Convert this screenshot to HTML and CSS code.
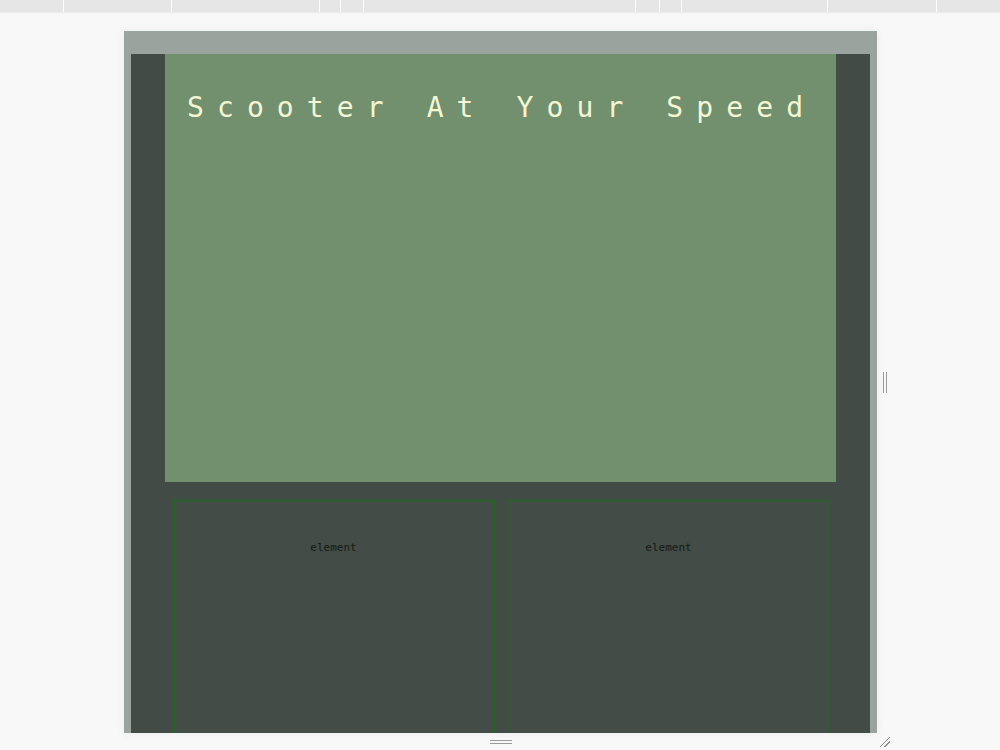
FILE: index.html
```html
<!DOCTYPE html>
<html>
<head>
<meta charset="utf-8">
<link rel="stylesheet" href="styles.css">
</head>
<body>
<div class="topbar">
  <span class="seg" style="width:64px"></span>
  <span class="seg" style="width:108px"></span>
  <span class="seg" style="width:148px"></span>
  <span class="seg" style="width:21px"></span>
  <span class="seg" style="width:23px"></span>
  <span class="seg" style="width:272px"></span>
  <span class="seg" style="width:24px"></span>
  <span class="seg" style="width:22px"></span>
  <span class="seg" style="width:146px"></span>
  <span class="seg" style="width:109px"></span>
  <span class="seg last"></span>
</div>
<div class="stage">
  <div class="frame">
    <div class="screen">
      <div class="hero">
        <h1 class="title">Scooter At Your Speed</h1>
      </div>
      <div class="cards">
        <div class="card"><p class="label">element</p></div>
        <div class="card"><p class="label">element</p></div>
      </div>
    </div>
    <span class="handle-v"></span>
    <span class="handle-h"></span>
    <span class="handle-corner"></span>
  </div>
</div>
</body>
</html>
```

FILE: styles.css
```css
html, body {
  margin: 0;
  padding: 0;
}
body {
  background: #f8f8f8;
  width: 1000px;
  height: 750px;
  overflow: hidden;
  font-family: "DejaVu Sans Mono", monospace;
}
.topbar {
  height: 12px;
  background: #e6e6e6;
  display: flex;
  box-shadow: 0 1px 0 #ececec;
}
.seg {
  height: 12px;
  box-sizing: border-box;
  border-right: 1px solid #fbfbfb;
  flex: none;
}
.seg.last {
  flex: 1;
  border-right: none;
}
.stage {
  padding-top: 19px;
  padding-left: 124px;
}
.frame {
  position: relative;
  width: 753px;
  height: 702px;
  box-sizing: border-box;
  background: #9aa39d;
  padding: 23px 7px 0 7px;
  box-shadow: 0 0 10px rgba(0, 0, 0, 0.06);
}
.screen {
  height: 679px;
  background: #424b45;
  padding: 0 34px;
  overflow: hidden;
}
.hero {
  height: 428px;
  background: #728f6e;
  padding: 37px 0 0 22px;
  box-sizing: border-box;
}
.title {
  margin: 0;
  font-family: "DejaVu Sans Mono", monospace;
  font-weight: normal;
  font-size: 28px;
  letter-spacing: 13.1px;
  color: #f4f6d4;
  white-space: nowrap;
}
.cards {
  display: flex;
  gap: 12px;
  margin-top: 17px;
  padding: 0 6px 0 7px;
}
.card {
  flex: 1;
  height: 260px;
  border: 3px solid #305a31;
  box-sizing: border-box;
  background: #434c46;
  padding-top: 39px;
}
.label {
  margin: 0;
  text-align: center;
  font-size: 11px;
  color: #161a17;
}
.handle-v {
  position: absolute;
  left: 759px;
  top: 341px;
  width: 1px;
  height: 21px;
  border-left: 1px solid #9a9a9a;
  border-right: 1px solid #9a9a9a;
  width: 2px;
}
.handle-h {
  position: absolute;
  left: 366px;
  top: 709px;
  width: 22px;
  height: 2px;
  border-top: 1px solid #9a9a9a;
  border-bottom: 1px solid #9a9a9a;
}
.handle-corner {
  position: absolute;
  left: 756px;
  top: 706px;
  width: 10px;
  height: 10px;
  background: linear-gradient(135deg, transparent 0 45%, #8e8e8e 45% 52%, transparent 52% 68%, #8e8e8e 68% 75%, transparent 75%);
}
```
